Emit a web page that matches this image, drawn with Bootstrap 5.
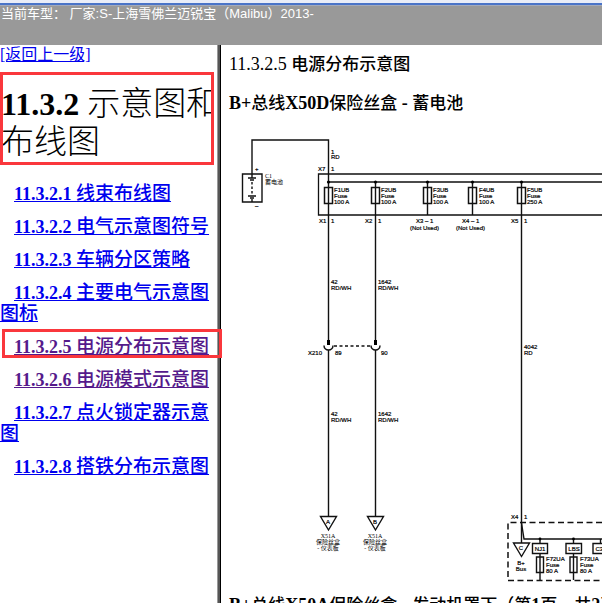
<!DOCTYPE html>
<html lang="zh-CN">
<head>
<meta charset="utf-8">
<meta name="viewport" content="width=device-width, initial-scale=1">
<title>11.3.2.5 电源分布示意图</title>
<link rel="stylesheet" href="https://cdn.jsdelivr.net/npm/bootstrap@5.3.0/dist/css/bootstrap.min.css">
<style>
body{font-family:"Liberation Serif","Noto Sans CJK SC",serif;font-size:18px;line-height:21px;color:#000;background:#fff}
.topbar{min-height:45px;background:#999;color:#fff;font:13px/16px "Liberation Sans","Noto Sans CJK SC",sans-serif;padding-left:1px}
.topbar::before{content:"";display:block;height:6px;margin-left:-1px;background:linear-gradient(#e9edf8 0 3px,#4a74c8 3px 5px,#a3aabb 5px)}
.toc{width:217px;font-weight:700}
.divider{width:4px;background:linear-gradient(90deg,#999 0 1px,#555 1px 3px,#000 3px)}
.back{font-size:16px;line-height:20px;font-weight:400}
a{color:#00e}
a.seen{color:#551a8b}
.han{font-size:19px;line-height:1;font-weight:500}
.toc-title{font-size:32px;line-height:38px;font-weight:700;margin:7px 3px 19px 0;padding:13px 0 4px 1px;outline:3px solid #fa373c;outline-offset:-3px}
.toc-title .han{font-size:33px;font-weight:300}
.toc-list{gap:12px;text-indent:14px}
.marked{position:relative;z-index:2}
.marked::after{content:"";position:absolute;top:-8px;right:-5px;bottom:0;left:2px;border:3px solid #fa373c;pointer-events:none}
.doc{padding:7px 0 0 8px;min-width:0}
.doc h2,.doc h3{font-size:18px;line-height:24px;font-weight:700;margin:0 0 15px}
.doc h2{font-weight:400}
.doc .han{font-size:17px;font-weight:500}
.doc h3{margin-bottom:10px}
.wiring{margin-bottom:5px}
.wiring text{font:6px "Liberation Sans","Noto Sans CJK SC",sans-serif;stroke:#000;stroke-width:.2px}
.wiring text.song{font-family:"Liberation Serif","Noto Sans CJK SC",serif;stroke:none}
</style>
<script src="https://cdn.jsdelivr.net/npm/bootstrap@5.3.0/dist/js/bootstrap.bundle.min.js"></script>
</head>
<body class="vh-100 overflow-hidden d-flex flex-column">
<header class="topbar flex-shrink-0">当前车型： 厂家:S-上海雪佛兰迈锐宝（Malibu）2013-</header>
<div class="d-flex flex-grow-1">
<nav class="toc flex-shrink-0" aria-label="目录">
<div class="back"><a href="#">[返回上一级]</a></div>
<h1 class="toc-title text-nowrap overflow-hidden">11.3.2 <span class="han">示意图和<br>布线图</span></h1>
<ul class="toc-list list-unstyled d-flex flex-column m-0">
<li><a href="#">11.3.2.1 <span class="han">线束布线图</span></a></li>
<li><a href="#">11.3.2.2 <span class="han">电气示意图符号</span></a></li>
<li><a href="#">11.3.2.3 <span class="han">车辆分区策略</span></a></li>
<li><a href="#">11.3.2.4 <span class="han">主要电气示意图图标</span></a></li>
<li class="marked"><a class="seen" href="#doc">11.3.2.5 <span class="han">电源分布示意图</span></a></li>
<li><a class="seen" href="#">11.3.2.6 <span class="han">电源模式示意图</span></a></li>
<li><a href="#">11.3.2.7 <span class="han">点火锁定器示意图</span></a></li>
<li><a href="#">11.3.2.8 <span class="han">搭铁分布示意图</span></a></li>
</ul>
</nav>
<div class="divider flex-shrink-0"></div>
<main id="doc" class="doc flex-grow-1 overflow-hidden text-nowrap">
<h2>11.3.2.5 <span class="han">电源分布示意图</span></h2>
<h3>B+<span class="han">总线</span>X50D<span class="han">保险丝盒</span> - <span class="han">蓄电池</span></h3>
<svg class="wiring d-block" width="400" height="463" viewBox="229 125 400 463" role="img" aria-label="X50D 保险丝盒电路图">
<defs>
<g id="fuse"><path d="M-4 0H4V16H-4Z" fill="none" stroke="#111" stroke-width="1.5"/><circle cy="-5.5" r="1.6"/></g>
<g id="plug"><path d="M-1.5 -6h3v5h-3z"/><path d="M-4.5 -.5A4.5 4.5 0 0 0 4.500 -.5" fill="none" stroke="#111" stroke-width="1.5"/></g>
<path id="tri" d="M-8 0H8L0 13.500Z" fill="none" stroke="#111" stroke-width="1.4"/>
</defs>
<g fill="none" stroke="#111" stroke-width="1.4">
<path d="M252 173V140H328.500V340M328.500 350V516M328.500 182H640M375.500 182V340M375.500 350V516M427.500 182V215M472.500 182V215M521.500 182V543"/>
<path d="M640 174H318.500V215H640" stroke-width="1.3"/>
<path d="M242.500 174H262V202H242.500Z"/>
<path d="M252 173v5M248 178h8M250 180h4M248 196h8M250 198h4M252 199v3"/>
<path d="M252 182v13" stroke-dasharray="2.500 2"/>
<path d="M334 346H371" stroke-dasharray="3 2.500"/>
<path d="M640 522.500H508V580.500H640" stroke-dasharray="6 3.500" stroke-width="1.500"/>
<path d="M521.500 523L524 539H640M540 539V544M573.500 539V544M540 554V580M573.500 554V580M600.500 539V544"/>
<path d="M532.500 543.500H547.500V553.500H532.500ZM566 543.500H581.500V553.500H566ZM593 543.500H608.500V553.500H593Z"/>
<path d="M536.500 557H543.500V572.500H536.500ZM570 557H577V572.500H570Z"/>
</g>
<circle cx="540" cy="539" r="1.400"/><circle cx="573.500" cy="539" r="1.400"/>
<use href="#fuse" x="328.500" y="187.500"/><use href="#fuse" x="375.500" y="187.500"/><use href="#fuse" x="427.500" y="187.500"/><use href="#fuse" x="472.500" y="187.500"/><use href="#fuse" x="521.500" y="187.500"/>
<use href="#plug" x="328.500" y="346"/><use href="#plug" x="375.500" y="346"/>
<use href="#tri" x="328.500" y="516.500"/><use href="#tri" x="375.500" y="516.500"/><use href="#tri" x="521.500" y="543"/>
<g>
<text x="255" y="171">+</text><text x="255" y="208">–</text>
<text class="song" x="265" y="178">C1</text><text class="song" x="265" y="184">蓄电池</text>
<text x="331" y="154">1</text><text x="331" y="159">RD</text>
<text x="318" y="171">X7</text><text x="331" y="171">1</text>
<text x="334" y="192">F1UB</text><text x="334" y="198">Fuse</text><text x="334" y="204">100 A</text>
<text x="381" y="192">F2UB</text><text x="381" y="198">Fuse</text><text x="381" y="204">100 A</text>
<text x="433" y="192">F3UB</text><text x="433" y="198">Fuse</text><text x="433" y="204">100 A</text>
<text x="479" y="192">F4UB</text><text x="479" y="198">Fuse</text><text x="479" y="204">100 A</text>
<text x="527" y="192">F5UB</text><text x="527" y="198">Fuse</text><text x="527" y="204">250 A</text>
<text x="319" y="223">X1</text><text x="331" y="223">1</text>
<text x="365" y="223">X2</text><text x="378" y="223">1</text>
<text x="416" y="223">X3 – 1</text><text x="410" y="230">(Not Used)</text>
<text x="462" y="223">X4 – 1</text><text x="456" y="230">(Not Used)</text>
<text x="511" y="223">X5</text><text x="524" y="223">1</text>
<text x="331" y="284">42</text><text x="331" y="290">RD/WH</text>
<text x="378" y="284">1642</text><text x="378" y="290">RD/WH</text>
<text x="308" y="355">X210</text><text x="335" y="355">89</text><text x="381" y="355">90</text>
<text x="331" y="416">42</text><text x="331" y="422">RD/WH</text>
<text x="378" y="416">1642</text><text x="378" y="422">RD/WH</text>
<text x="524" y="349">4042</text><text x="524" y="355">RD</text>
<text x="511" y="519">X4</text><text x="524" y="519">1</text>
<text x="546" y="561">F72UA</text><text x="546" y="567">Fuse</text><text x="546" y="573">80 A</text>
<text x="580" y="561">F73UA</text><text x="580" y="567">Fuse</text><text x="580" y="573">80 A</text>
</g>
<g text-anchor="middle">
<text x="328" y="524">A</text><text x="375" y="524">B</text><text x="521" y="550">C</text>
<text x="521" y="565">B+</text><text x="521" y="571">Bus</text>
<text x="540" y="551">NJ1</text><text x="574" y="551">LBS</text><text x="601" y="551">C31</text>
<text class="song" x="328" y="538">X51A</text><text class="song" x="328" y="544">保险丝盒</text><text class="song" x="328" y="550">- 仪表板</text>
<text class="song" x="375" y="538">X51A</text><text class="song" x="375" y="544">保险丝盒</text><text class="song" x="375" y="550">- 仪表板</text>
</g>
</svg>
<h3>B+<span class="han">总线</span>X50A<span class="han">保险丝盒</span> - <span class="han">发动机罩下（第</span>1<span class="han">页，共</span>2<span class="han">页）</span></h3>
</main>
</div>
</body>
</html>
